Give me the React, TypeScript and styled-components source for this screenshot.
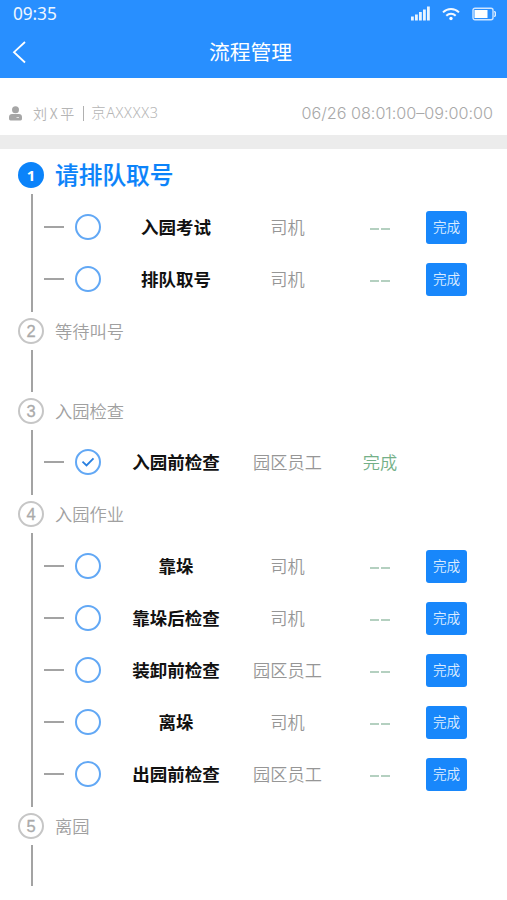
import React from "react";
import styled, { createGlobalStyle } from "styled-components";

const GlobalStyle = createGlobalStyle`
  * { box-sizing: border-box; }
  html, body { margin: 0; background: #fff; }
  body { font-family: "Noto Sans CJK SC", "Noto Sans", sans-serif; }
`;

const Screen = styled.div`
  width: 507px;
  height: 900px;
  overflow: hidden;
  background: #fff;
`;

const Header = styled.header`
  height: 78px;
  background: #288fff;
  color: #fff;
`;

const StatusBar = styled.div`
  height: 27px;
  padding: 0 11px 0 13px;
  display: flex;
  align-items: center;
  justify-content: space-between;
`;

const Clock = styled.span`
  font: 400 17.3px/27px "Noto Sans", sans-serif;
  letter-spacing: -0.1px;
  color: #eef6ff;
`;

const StatusIcons = styled.div`
  display: flex;
  align-items: center;
  gap: 12px;
  svg { display: block; }
`;

const NavBar = styled.div`
  height: 49px;
  display: grid;
  grid-template-columns: 40px 1fr 46px;
  align-items: center;
`;

const BackButton = styled.button`
  border: 0;
  padding: 0 0 0 12px;
  background: none;
  display: flex;
`;

const Title = styled.h1`
  margin: 0;
  padding-bottom: 2px;
  text-align: center;
  font-size: 20.8px;
  line-height: 46px;
  font-weight: 400;
`;

const InfoBar = styled.div`
  height: 57px;
  padding: 13px 14px 0 9px;
  display: flex;
  align-items: center;
  color: #b5b5b5;
`;

const Driver = styled.span`
  margin: 0 0 0 11px;
  font-size: 14px;
  line-height: 24px;
  font-weight: 350;
  letter-spacing: 0.8px;
  word-spacing: -2px;
`;

const Divider = styled.span`
  width: 1px;
  height: 15px;
  margin: 0 7px 0 8px;
  background: #b0b0b0;
`;

const Plate = styled.span`
  font: 300 14.4px/24px "Noto Sans", "Noto Sans CJK SC", sans-serif;
  letter-spacing: 0.65px;
`;

const TimeRange = styled.span`
  margin-left: auto;
  font: 300 16.2px/24px Inter, sans-serif;
  letter-spacing: -0.02px;
  white-space: nowrap;
  color: #a8a8a8;
`;

const Band = styled.div`
  height: 14px;
  background: #ececec;
`;

const Steps = styled.main`
  padding: 13px 0 0 18px;
`;

const StepHead = styled.div`
  height: 26px;
  display: flex;
  align-items: center;
`;

const Badge = styled.span<{ $active?: boolean }>`
  width: 26px;
  height: 26px;
  flex: none;
  border-radius: 50%;
  border: ${(p) => (p.$active ? "0" : "2px solid #c6c6c6")};
  background: ${(p) => (p.$active ? "#0b83fa" : "#fff")};
  color: ${(p) => (p.$active ? "#fff" : "#aaa")};
  font: ${(p) => (p.$active ? "700 15px" : "500 16.5px")} / 1 ${(p) => (p.$active ? '"Noto Sans"' : '"Liberation Sans"')}, sans-serif;
  -webkit-text-stroke: ${(p) => (p.$active ? "0" : "0.3px #aaa")};
  display: flex;
  align-items: center;
  justify-content: center;
`;

const StepTitle = styled.h2<{ $active?: boolean }>`
  margin: 0 0 0 11px;
  padding-bottom: ${(p) => (p.$active ? "2px" : "0")};
  font-size: ${(p) => (p.$active ? "23.7px" : "17.3px")};
  line-height: 26px;
  font-weight: ${(p) => (p.$active ? 500 : 350)};
  color: ${(p) => (p.$active ? "#0b83fa" : "#a0a0a0")};
  -webkit-text-stroke: ${(p) => (p.$active ? "0.2px #0b83fa" : "0")};
`;

const StepBody = styled.div<{ $empty: boolean }>`
  height: ${(p) => (p.$empty ? "54px" : "auto")};
  display: flex;
`;

const Rail = styled.div`
  width: 2px;
  margin: 6px 11px 6px 13px;
  background: #a3a3a3;

  section:last-child & {
    margin-bottom: 7px;
  }
`;

const Tasks = styled.div`
  flex: 1;
  padding: 13px 0;

  section:nth-child(3) & {
    padding: 12px 0 13px;
  }
`;

const TaskRow = styled.div`
  height: 52px;
  display: grid;
  grid-template-columns: 20px 11px 26px 19px 112px 111px 74px 9px 41px;
  align-items: center;
`;

const Dash = styled.span`
  grid-column: 1;
  height: 2px;
  background: #a3a3a3;
`;

const Circle = styled.span`
  grid-column: 3;
  width: 26px;
  height: 26px;
  border: 2px solid #62a8f5;
  border-radius: 50%;
  display: flex;
  align-items: center;
  justify-content: center;
`;

const TaskName = styled.span`
  grid-column: 5;
  text-align: center;
  font-size: 17.5px;
  line-height: 26px;
  font-weight: 700;
  color: #111;
`;

const Role = styled.span`
  grid-column: 6;
  text-align: center;
  font-size: 17.2px;
  line-height: 26px;
  font-weight: 350;
  color: #969696;
`;

const State = styled.span`
  grid-column: 7;
  display: flex;
  justify-content: center;
  gap: 2px;
  font-size: 17.2px;
  line-height: 26px;
  font-weight: 350;
  color: #74b088;
`;

const PendingMark = styled.i`
  width: 9px;
  height: 2px;
  margin-top: 3px;
  background: #b4d0c0;
`;

const DoneButton = styled.button`
  grid-column: 9;
  height: 33px;
  padding: 0 0 2px;
  border: 0;
  border-radius: 3px;
  background: #1887fb;
  color: #dcecff;
  font: 350 13.6px/31px "Noto Sans CJK SC", sans-serif;
`;

type Task = { name: string; role: string; done?: boolean };
type Step = { title: string; tasks: Task[] };

const steps: Step[] = [
  { title: "请排队取号", tasks: [{ name: "入园考试", role: "司机" }, { name: "排队取号", role: "司机" }] },
  { title: "等待叫号", tasks: [] },
  { title: "入园检查", tasks: [{ name: "入园前检查", role: "园区员工", done: true }] },
  {
    title: "入园作业",
    tasks: [
      { name: "靠垛", role: "司机" },
      { name: "靠垛后检查", role: "司机" },
      { name: "装卸前检查", role: "园区员工" },
      { name: "离垛", role: "司机" },
      { name: "出园前检查", role: "园区员工" },
    ],
  },
  { title: "离园", tasks: [] },
];

function SignalIcon() {
  return (
    <svg width="19" height="15" viewBox="0 0 19 15" fill="#e9f4ff">
      <rect x="0" y="10.5" width="2.8" height="4" />
      <rect x="4" y="8.5" width="2.8" height="6" />
      <rect x="8" y="6" width="2.8" height="8.5" />
      <rect x="12" y="3.5" width="2.8" height="11" />
      <rect x="16" y="0.5" width="2.8" height="14" />
    </svg>
  );
}

function WifiIcon() {
  return (
    <svg width="18" height="14" viewBox="0 0 18 14" fill="none" stroke="#f2f8ff" strokeWidth="2">
      <path d="M1 5.4C5.5 1 12.500 1 17 5.400" />
      <path d="M4.300 8.700C7 6 11 6 13.700 8.700" />
      <circle cx="9" cy="11.500" r="1.700" fill="#fff" stroke="none" />
    </svg>
  );
}

function BatteryIcon() {
  return (
    <svg width="24" height="14" viewBox="0 0 24 14">
      <rect x="1" y="1.200" width="20" height="11.600" rx="2" fill="none" stroke="#cfe5ff" strokeWidth="1.400" />
      <rect x="2.500" y="3" width="13" height="8" fill="#fff" />
      <path d="M22 4.500L23.300 5.200V8.800L22 9.500" fill="none" stroke="#e9f4ff" strokeWidth="1.300" />
    </svg>
  );
}

function TaskItem({ task }: { task: Task }) {
  return (
    <TaskRow>
      <Dash />
      <Circle>
        {task.done && (
          <svg width="14" height="12" viewBox="0 0 14 12" fill="none" stroke="#287fe0" strokeWidth="1.800">
            <path d="M1.500 5.600L5.500 9.400L12.500 2.300" />
          </svg>
        )}
      </Circle>
      <TaskName>{task.name}</TaskName>
      <Role>{task.role}</Role>
      <State>{task.done ? "完成" : <><PendingMark /><PendingMark /></>}</State>
      {!task.done && <DoneButton>完成</DoneButton>}
    </TaskRow>
  );
}

export default function App() {
  return (
    <Screen>
      <GlobalStyle />
      <Header>
        <StatusBar>
          <Clock>09:35</Clock>
          <StatusIcons>
            <SignalIcon />
            <WifiIcon />
            <BatteryIcon />
          </StatusIcons>
        </StatusBar>
        <NavBar>
          <BackButton aria-label="返回">
            <svg width="15" height="24" viewBox="0 0 15 24" fill="none" stroke="#fff" strokeWidth="1.800">
              <path d="M13 2L2 12.200L13 22.500" />
            </svg>
          </BackButton>
          <Title>流程管理</Title>
        </NavBar>
      </Header>
      <InfoBar>
        <svg width="13" height="15" viewBox="0 0 13 15" fill="#a6a6a6">
          <circle cx="6.500" cy="3.700" r="3.500" />
          <path d="M0 12.500V11C0 9 1.300 8 3 8H10C11.700 8 13 9 13 11V12.500C13 13.800 12.500 14.500 11.500 14.500H1.500C.5 14.500 0 13.800 0 12.500Z" />
          <path d="M7.500 11.500H10" stroke="#e2e2e2" />
        </svg>
        <Driver>刘 X 平</Driver>
        <Divider />
        <Plate>京AXXXX3</Plate>
        <TimeRange>06/26 08:01:00–09:00:00</TimeRange>
      </InfoBar>
      <Band />
      <Steps>
        {steps.map((step, i) => (
          <section key={step.title}>
            <StepHead>
              <Badge $active={i === 0}>{i + 1}</Badge>
              <StepTitle $active={i === 0}>{step.title}</StepTitle>
            </StepHead>
            <StepBody $empty={step.tasks.length === 0}>
              <Rail />
              {step.tasks.length > 0 && (
                <Tasks>
                  {step.tasks.map((task) => <TaskItem key={task.name} task={task} />)}
                </Tasks>
              )}
            </StepBody>
          </section>
        ))}
      </Steps>
    </Screen>
  );
}
